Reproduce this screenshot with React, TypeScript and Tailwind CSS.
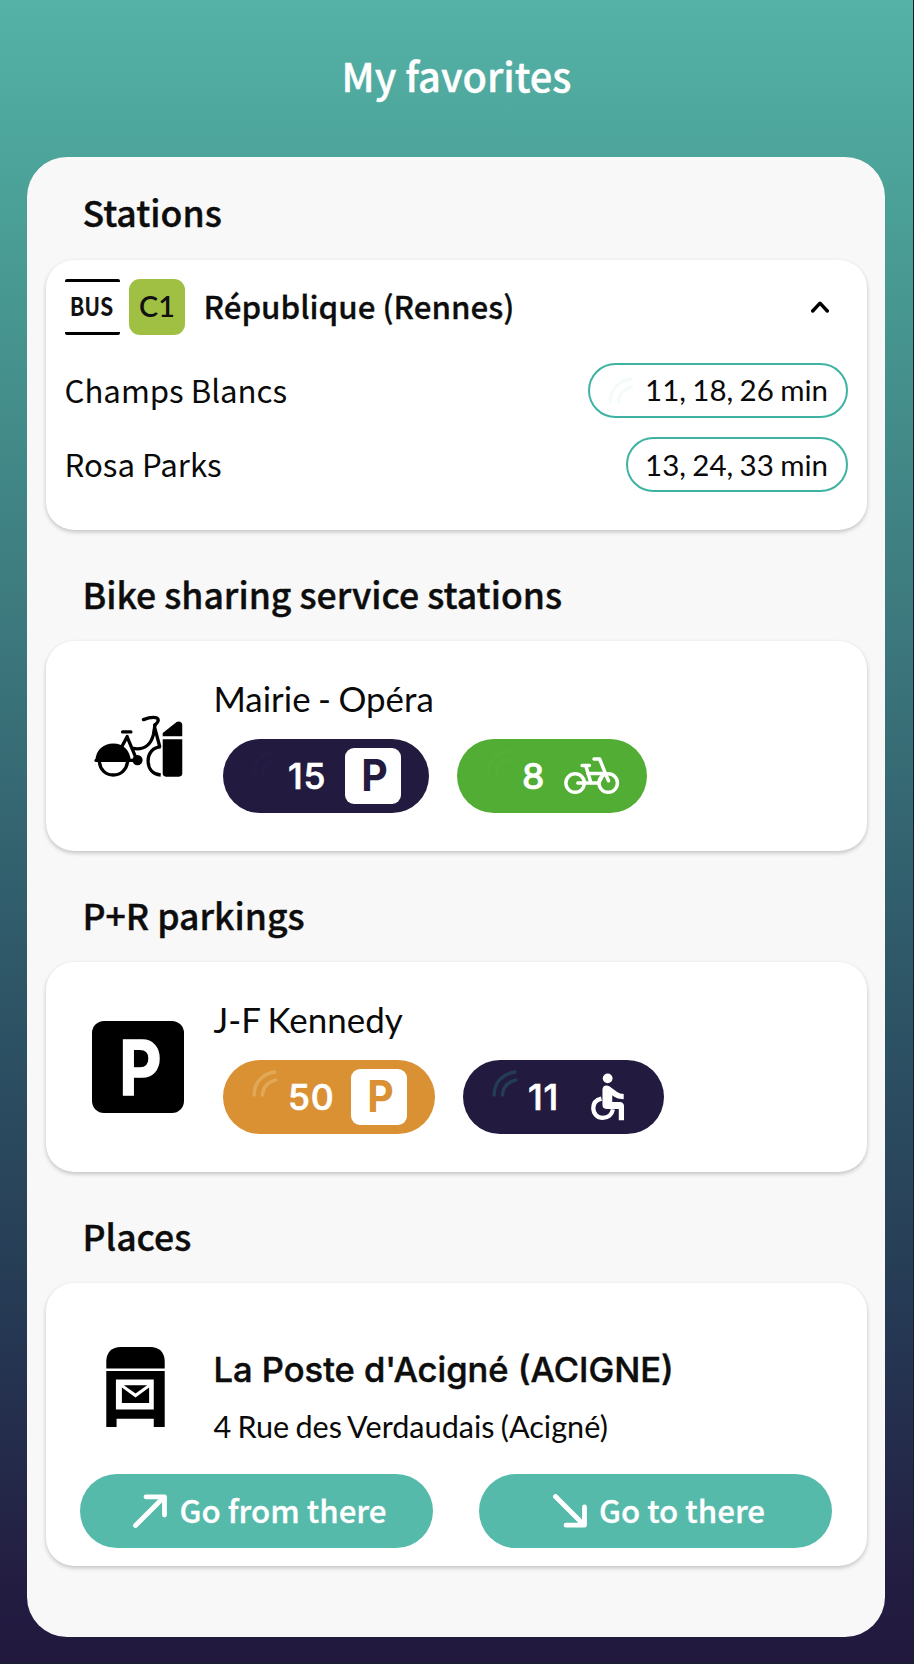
import type { ReactNode } from "react";

const Section = ({ title, children }: { title: string; children: ReactNode }) => (
  <section className="group">
    <h2 className="flex h-[96px] items-center pt-[2px] pl-[36.5px] text-[35.6px] leading-none font-medium text-[#0d0d0d] [-webkit-text-stroke:0.4px_#0d0d0d] group-first:pt-0">{title}</h2>
    {children}
  </section>
);

const card = "rounded-[28px] bg-white shadow-[0_2px_4px_rgba(0,0,0,0.22)]";

const Waves = ({ className }: { className: string }) => (
  <svg viewBox="110 60 77 81" className={`h-[27px] w-[26px] shrink-0 ${className}`} fill="none" stroke="currentColor" strokeWidth="10" strokeLinecap="round">
    <path d="M116 135C116 98 140 72 178 66" />
    <path d="M141 135C142 112 157 96 181 90" />
  </svg>
);

const BusIcon = () => (
  <div className="flex h-[56px] w-[55px] items-center justify-center rounded-[2px] border-y-[3px] border-black pb-[4px]">
    <span className="scale-x-[0.82] text-[26px] leading-none font-bold text-[#111]">BUS</span>
  </div>
);

const SharedBikeIcon = () => (
  <svg viewBox="42 45 268 187" className="ml-px h-[62px] w-[89px]" fill="none" stroke="#000" strokeWidth="10" strokeLinecap="round" strokeLinejoin="round">
    <path d="M46 184C46 152 70 131 100 131C131 131 150 152 153 184Z" fill="#000" stroke="none" />
    <path d="M48 182H172" />
    <path d="M58 186C60 210 77 226 100 226C123 226 140 210 143 186" />
    <path d="M128 96H153M142 110L126 140M142 112L169 176M160 146C195 152 214 132 221 104L226 74M225 84L240 140" />
    <path d="M191 59C206 53 222 50 232 54C240 60 232 70 225 76" />
    <circle cx="173" cy="181" r="15.500" fill="#000" stroke="none" />
    <path d="M243 141C221 141 205 160 205 183C205 207 219 224 243 226" strokeLinecap="butt" />
    <path d="M249 109V99L291 66C299 62 308 66 308 75V109Z" fill="#000" stroke="none" />
    <path d="M249 118H308V221Q308 231 298 231H259Q249 231 249 221Z" fill="#000" stroke="none" />
  </svg>
);

const MailboxIcon = () => (
  <svg viewBox="64 36 176 241" className="h-[80px] w-[59px]">
    <path d="M64 101V80C64 52 80 36 108 36H196C224 36 240 52 240 80V101Z" />
    <path fillRule="evenodd" d="M64 108H240V277H207V252H95V277H64ZM93 134V224H207V134Z" />
    <path d="M111 158L152 188L193 158V205H111Z" />
    <path d="M117 151H187L152 176Z" />
  </svg>
);

const CityBikeIcon = () => (
  <svg viewBox="1046 82 168 115" className="ml-px h-[38px] w-[56px] shrink-0" fill="none" stroke="#fff" strokeWidth="10.500" strokeLinecap="round" strokeLinejoin="round">
    <circle cx="1079" cy="161" r="28" />
    <circle cx="1179" cy="161" r="28" />
    <path d="M1087 161H1150M1100 108H1122M1111 108L1127 161M1117 132H1163M1136 88H1153L1180 154M1166 130L1150 161" />
  </svg>
);

const WheelchairIcon = () => (
  <svg viewBox="1130 70 104 146" className="h-[48px] w-[34px]" fill="none" stroke="#fff">
    <circle cx="1181" cy="86" r="15" fill="#fff" stroke="none" />
    <path fill="#fff" stroke="none" d="M1165 121C1165 108 1176 105 1186 110L1210 128Q1218 134 1230 134V150C1212 150 1203 144 1195 138V158H1218Q1231 158 1231 172V214H1215V180H1180Q1165 180 1165 166Z" />
    <path strokeWidth="13" d="M1162 148C1145 152 1137 164 1137 177C1137 195 1150 207 1166 207C1182 207 1194 197 1197 181" />
  </svg>
);

const ParkBox = ({ className }: { className: string }) => (
  <span className={`flex h-[56px] w-[56px] items-center justify-center rounded-[9px] bg-white pb-px pl-[2px] font-['Inter',sans-serif] text-[44.5px] leading-none font-bold ${className}`}>
    <span className="scale-x-[0.92]">P</span>
  </span>
);

const Counter = ({ className, wave, value, children }: { className: string; wave: string; value: string; children: ReactNode }) => (
  <div className={`relative flex h-[74px] items-center rounded-full pr-[27px] pl-[65.5px] ${className}`}>
    <div className="absolute top-[10px] left-[29px]"><Waves className={wave} /></div>
    <span className="pt-[2px] font-['Inter',sans-serif] text-[35.5px] leading-none font-medium tracking-[0.8px] text-white [-webkit-text-stroke:0.7px_white]">{value}</span>
    <span className="ml-auto flex w-[57px] items-center justify-center">{children}</span>
  </div>
);

const Facility = ({ icon, name, children }: { icon: ReactNode; name: string; children: ReactNode }) => (
  <div className={`${card} flex h-[210px] pl-[46px]`}>
    <div className="mt-[59px] flex h-[92px] w-[92px] shrink-0 items-center justify-center">{icon}</div>
    <div className="ml-[29px] pt-[38px]">
      <h3 className="h-[40px] pl-[0.5px] font-['Lato',sans-serif] text-[34.9px] leading-[40px] [word-spacing:-1.5px]">{name}</h3>
      <div className="mt-[20px] ml-[9.5px] flex gap-[28px]">{children}</div>
    </div>
  </div>
);

const Departure = ({ to, times, wide }: { to: string; times: string; wide?: boolean }) => (
  <div className="flex h-[55px] items-center justify-between">
    <span className="pb-px text-[31.2px] leading-none">{to}</span>
    <span className={`flex h-[55px] items-center rounded-full border-2 border-[#3fb3a3] pr-[18px] font-['Lato',sans-serif] text-[29.5px] leading-none [word-spacing:-1.2px] ${wide ? "w-[260px] justify-between pl-[18px]" : "w-[222px] justify-end"}`}>
      {wide && <Waves className="text-[#f5fbfb]" />}
      <span className="whitespace-nowrap">{times}</span>
    </span>
  </div>
);

const Action = ({ label, children }: { label: string; children: ReactNode }) => (
  <button className="flex h-[74px] w-[353px] items-center justify-center gap-[12px] rounded-full bg-[#56baab] pl-[7px] text-[31.3px] font-medium text-white [-webkit-text-stroke:0.3px_white]">
    <svg viewBox="0 0 34 34" className="h-[34px] w-[34px]" fill="none" stroke="currentColor" strokeWidth="4.800" strokeLinecap="round" strokeLinejoin="round">{children}</svg>
    <span className="-mt-[3px] leading-none">{label}</span>
  </button>
);

export default function App() {
  return (
    <div className="h-[1664px] w-[914px] border-r border-b border-[#14202c] bg-[linear-gradient(180deg,#54b2a6_0%,#4a9f96_13%,#3c787d_38%,#2f5969_57%,#263b55_78%,#242c4b_87%,#231d42_95%,#22183e_100%)] font-['Noto_Sans_CJK_JP',sans-serif] text-[#0a0a0a]">
      <header className="flex h-[157px] items-center justify-center pb-[8px]">
        <h1 className="text-[39.8px] leading-none font-medium text-white [-webkit-text-stroke:0.4px_white]">My favorites</h1>
      </header>
      <main className="ml-[27px] flex h-[1480px] w-[858px] flex-col gap-[15px] rounded-[40px] bg-[#f8f8f8] pt-[7px] pr-[18px] pl-[19px]">
        <Section title="Stations">
          <div className={`${card} h-[270px] pt-[18.5px] pr-[19px] pl-[18.5px]`}>
            <div className="flex h-[56px] items-center">
              <BusIcon />
              <span className="ml-[9.5px] flex h-[56px] w-[56px] items-center justify-center rounded-[11px] bg-[#9fc043] font-['Lato',sans-serif] text-[28.8px] leading-none font-semibold text-[#111]">C1</span>
              <h3 className="ml-[18.5px] pb-[2px] text-[31.3px] leading-none font-medium text-[#0d0d0d] [-webkit-text-stroke:0.3px_#0d0d0d]">République (Rennes)</h3>
              <svg viewBox="0 0 18 12" className="mr-[19px] ml-auto h-[12px] w-[18px]" fill="none" stroke="#000" strokeWidth="3.400" strokeLinecap="round" strokeLinejoin="round">
                <path d="M1.700 10L9 2.200L16.300 10" />
              </svg>
            </div>
            <div className="mt-[28px] flex flex-col gap-[19.5px]">
              <Departure to="Champs Blancs" times="11, 18, 26 min" wide />
              <Departure to="Rosa Parks" times="13, 24, 33 min" />
            </div>
          </div>
        </Section>

        <Section title="Bike sharing service stations">
          <Facility icon={<SharedBikeIcon />} name="Mairie - Opéra">
            <Counter className="w-[206px] bg-[#231a40]" wave="text-[#241d43]" value="15">
              <ParkBox className="text-[#231a40]" />
            </Counter>
            <Counter className="w-[190px] bg-[#52ad35]" wave="text-[#54ae38]" value="8">
              <CityBikeIcon />
            </Counter>
          </Facility>
        </Section>

        <Section title="P+R parkings">
          <Facility
            icon={
              <span className="flex h-[92px] w-[92px] items-center justify-center rounded-[12px] bg-black pl-[4px] font-['Inter',sans-serif] text-[75px] leading-none font-bold text-white [-webkit-text-stroke:1.5px_white]">
                <span className="scale-x-[0.87]">P</span>
              </span>
            }
            name="J-F Kennedy"
          >
            <Counter className="w-[212px] bg-[#d99134]" wave="text-[#e1a957]" value="50">
              <ParkBox className="text-[#d99134]" />
            </Counter>
            <Counter className="w-[201px] bg-[#231a40]" wave="text-[#243d57]" value="11">
              <WheelchairIcon />
            </Counter>
          </Facility>
        </Section>

        <Section title="Places">
          <div className={`${card} h-[283px]`}>
            <div className="flex h-[191px] pl-[60px]">
              <div className="pt-[64px]"><MailboxIcon /></div>
              <div className="pt-[67px] pl-[48.5px]">
                <h3 className="h-[40px] font-['Inter',sans-serif] text-[34.5px] leading-[40px] font-medium text-[#0d0d0d] [-webkit-text-stroke:0.5px_#0d0d0d]">La Poste d'Acigné (ACIGNE)</h3>
                <p className="mt-[17px] font-['Lato',sans-serif] text-[30.6px] leading-[40px] [word-spacing:-1.6px]">4 Rue des Verdaudais (Acigné)</p>
              </div>
            </div>
            <div className="flex gap-[46px] pl-[34px]">
              <Action label="Go from there"><path d="M2.500 31.500L31 3M13 2.800H31.500V21" /></Action>
              <Action label="Go to there"><path d="M2.500 2.500L31 31M13 31.200H31.500V13" /></Action>
            </div>
          </div>
        </Section>
      </main>
    </div>
  );
}
